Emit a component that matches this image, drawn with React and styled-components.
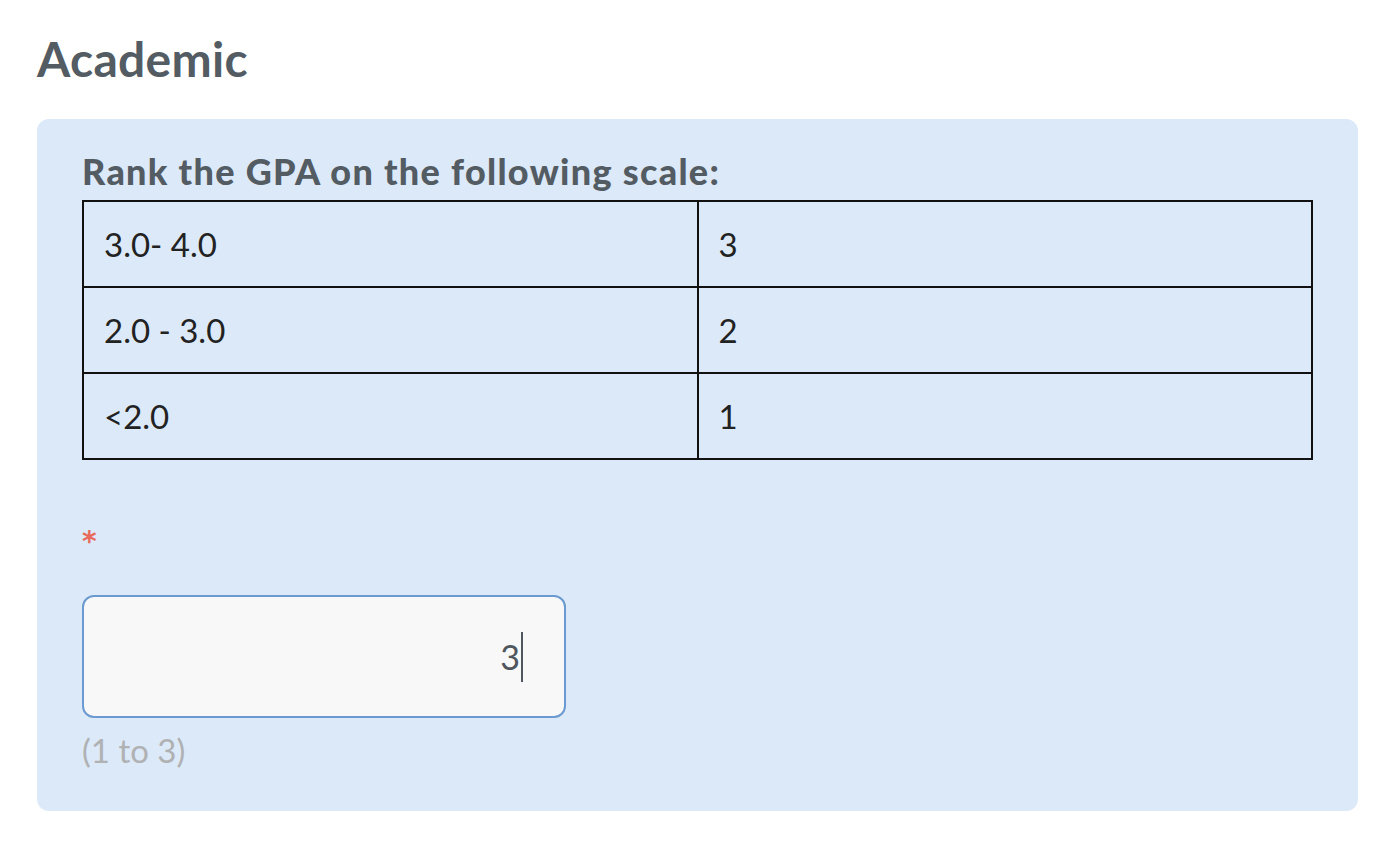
import React from 'react';
import styled, { createGlobalStyle } from 'styled-components';

const GlobalStyle = createGlobalStyle`
  body {
    margin: 0;
    background: #ffffff;
    font-family: Lato, "Noto Sans", sans-serif;
  }
`;

const Page = styled.div`
  padding: 35px 36px 30px 37px;
`;

const Heading = styled.h2`
  margin: 0 0 36px;
  font-size: 48px;
  line-height: 48px;
  font-weight: 700;
  letter-spacing: 0.3px;
  color: #535b63;
`;

const Panel = styled.section`
  background: #dce9f8;
  border-radius: 12px;
  padding: 35px 45px 46px 45px;
  box-sizing: border-box;
  width: 1321px;
  height: 692px;
`;

const Question = styled.div`
  font-size: 36px;
  line-height: 34px;
  font-weight: 900;
  letter-spacing: 1.3px;
  color: #535b63;
  margin-bottom: 12px;
`;

const ScaleTable = styled.table`
  width: 100%;
  border-collapse: collapse;
  border: 2px solid #111;
  table-layout: fixed;
`;

const Cell = styled.td`
  border: 2px solid #111;
  height: 84px;
  padding: 0 20px;
  font-size: 33px;
  color: #222;
  vertical-align: middle;
`;

const Required = styled.div`
  margin-top: 62px;
  height: 40px;
  font-family: "DejaVu Sans", sans-serif;
  font-weight: 700;
  font-size: 28px;
  line-height: 40px;
  color: #e86a5c;
`;

const NumberBox = styled.div`
  margin-top: 33px;
  width: 484px;
  height: 123px;
  box-sizing: border-box;
  border: 2px solid #6b9ad0;
  border-radius: 12px;
  background: #f8f8f8;
  display: flex;
  align-items: center;
  justify-content: flex-end;
  padding-right: 41px;
  font-size: 34px;
  color: #4f565d;
`;

const Caret = styled.span`
  display: inline-block;
  width: 2px;
  height: 50px;
  background: #4f565d;
  margin-left: 1px;
`;

const Hint = styled.div`
  margin-top: 14px;
  font-size: 33px;
  line-height: 36px;
  color: #afb1b3;
`;

const rows = [
  ['3.0- 4.0', '3'],
  ['2.0 - 3.0', '2'],
  ['<2.0', '1'],
];

export default function App() {
  return (
    <Page>
      <GlobalStyle />
      <Heading>Academic</Heading>
      <Panel>
        <Question>Rank the GPA on the following scale:</Question>
        <ScaleTable>
          <tbody>
            {rows.map(([range, score]) => (
              <tr key={range}>
                <Cell>{range}</Cell>
                <Cell>{score}</Cell>
              </tr>
            ))}
          </tbody>
        </ScaleTable>
        <Required>*</Required>
        <NumberBox>
          3<Caret />
        </NumberBox>
        <Hint>(1 to 3)</Hint>
      </Panel>
    </Page>
  );
}
